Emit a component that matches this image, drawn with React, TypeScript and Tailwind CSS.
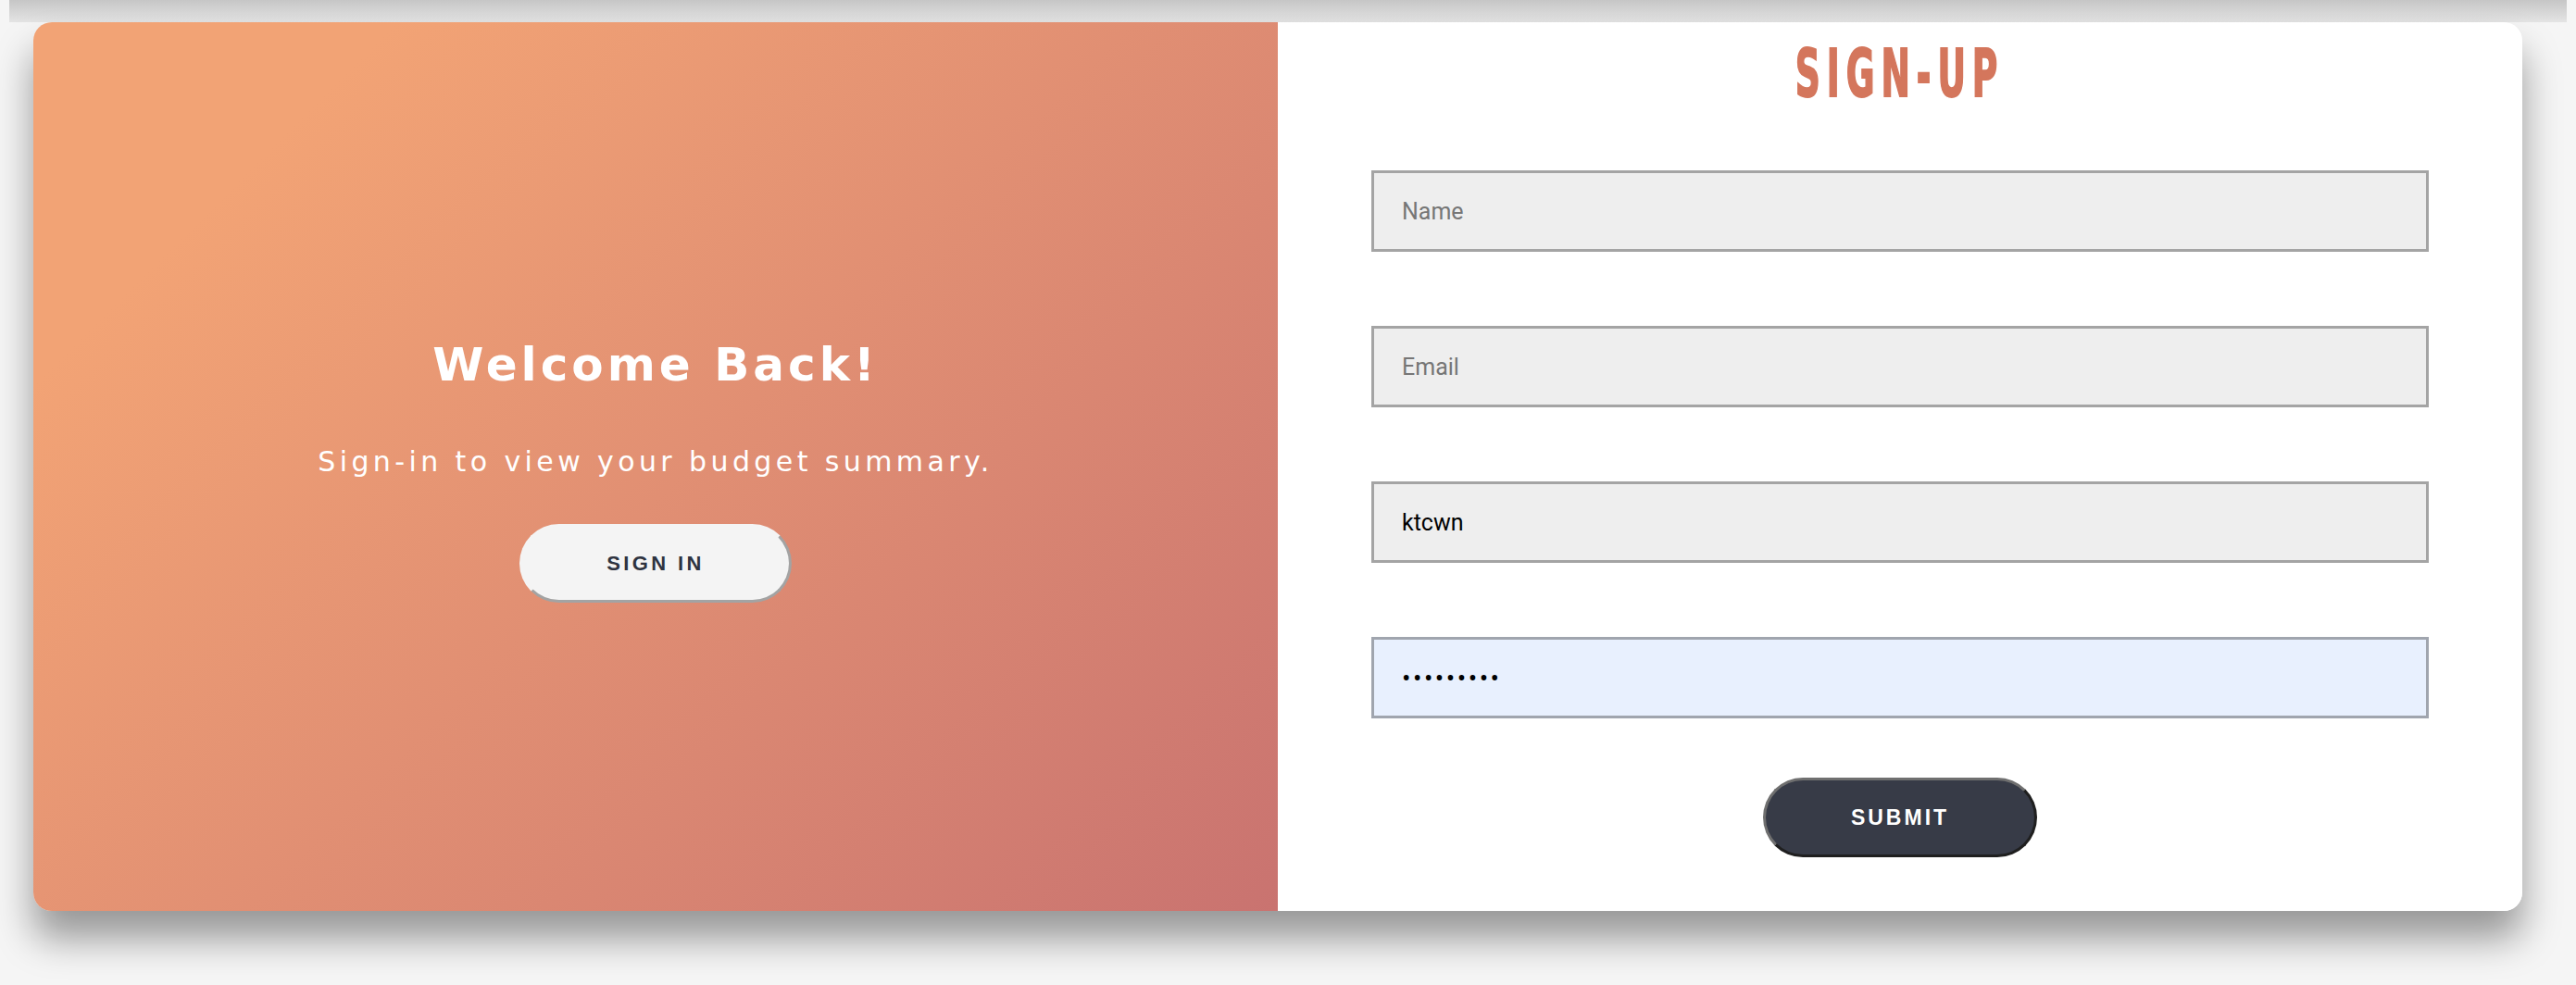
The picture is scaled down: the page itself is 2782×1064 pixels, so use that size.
import React from 'react'

const FIELDS = [
  { type: 'text', placeholder: 'Name', value: '' },
  { type: 'email', placeholder: 'Email', value: '' },
  { type: 'text', placeholder: 'Username', value: 'ktcwn' },
  { type: 'password', placeholder: 'Password', value: '123456789', autofill: true },
]

function WelcomePanel() {
  return (
    <div className="w-[1344px] h-full flex flex-col items-center pt-[345px] bg-[linear-gradient(135deg,#f2a375_17%,#c97370_100%)] text-white">
      <h1 className="font-['DejaVu_Sans',sans-serif] font-bold text-[50px] leading-[50px] tracking-[4px]">
        Welcome Back!
      </h1>
      <p className="mt-[65px] font-['DejaVu_Sans',sans-serif] text-[30px] leading-[30px] tracking-[4.4px]">
        Sign-in to view your budget summary.
      </p>
      <button
        type="button"
        className="mt-[52px] w-[294px] h-[85px] rounded-full bg-[#f4f4f4] border-[3px] border-t-[#f4f4f4] border-l-[#f4f4f4] border-r-[#a3a3a3] border-b-[#a3a3a3] text-[#2e3340] font-['Liberation_Sans',sans-serif] font-bold text-[22px] tracking-[3.4px]"
      >
        SIGN IN
      </button>
    </div>
  )
}

function SignUpPanel() {
  return (
    <div className="w-[1344px] h-full bg-white flex flex-col items-center pt-[19px]">
      <h2 className="h-[72px] text-[72px] leading-[72px] font-['DejaVu_Sans_Condensed','DejaVu_Sans',sans-serif] font-bold text-[#d4765c] tracking-[12px] [-webkit-text-stroke:2px_#d4765c]">
        <span className="inline-block scale-x-[0.58]">SIGN-UP</span>
      </h2>

      <form className="mt-[69px] w-[1142px] flex flex-col gap-[80px]" onSubmit={e => e.preventDefault()}>
        {FIELDS.map(f => (
          <input
            key={f.placeholder}
            type={f.type}
            readOnly
            placeholder={f.placeholder}
            defaultValue={f.value}
            className={`h-[88px] w-full border-[3px] px-[30px] font-['Roboto',sans-serif] text-black outline-none placeholder:text-[#767676] ${
              f.autofill
                ? 'bg-[#e8f0fe] border-[#a0a5ae] text-[28px] tracking-[2.5px]'
                : 'bg-[#eeeeee] border-[#a4a4a4] text-[25px]'
            }`}
          />
        ))}
      </form>

      <button
        type="button"
        className="mt-[64px] w-[296px] h-[86px] rounded-full bg-[#373b47] border-[3px] border-t-[#6f6f6f] border-l-[#6f6f6f] border-r-[#1f1f1f] border-b-[#1f1f1f] text-white font-['Liberation_Sans',sans-serif] font-bold text-[23px] tracking-[3px]"
      >
        SUBMIT
      </button>
    </div>
  )
}

export default function App() {
  return (
    <div className="min-h-screen w-[2782px] bg-[#f5f5f5] overflow-hidden">
      {/* shadow of the section above */}
      <div className="h-[24px] mx-[10px] bg-[linear-gradient(to_bottom,#c6c6c6,#e4e4e4)]" />

      <div className="ml-[36px] w-[2688px] h-[960px] flex rounded-[20px] overflow-hidden shadow-[0_30px_40px_rgba(0,0,0,0.38)]">
        <WelcomePanel />
        <SignUpPanel />
      </div>

      <div className="h-[80px]" />
    </div>
  )
}
